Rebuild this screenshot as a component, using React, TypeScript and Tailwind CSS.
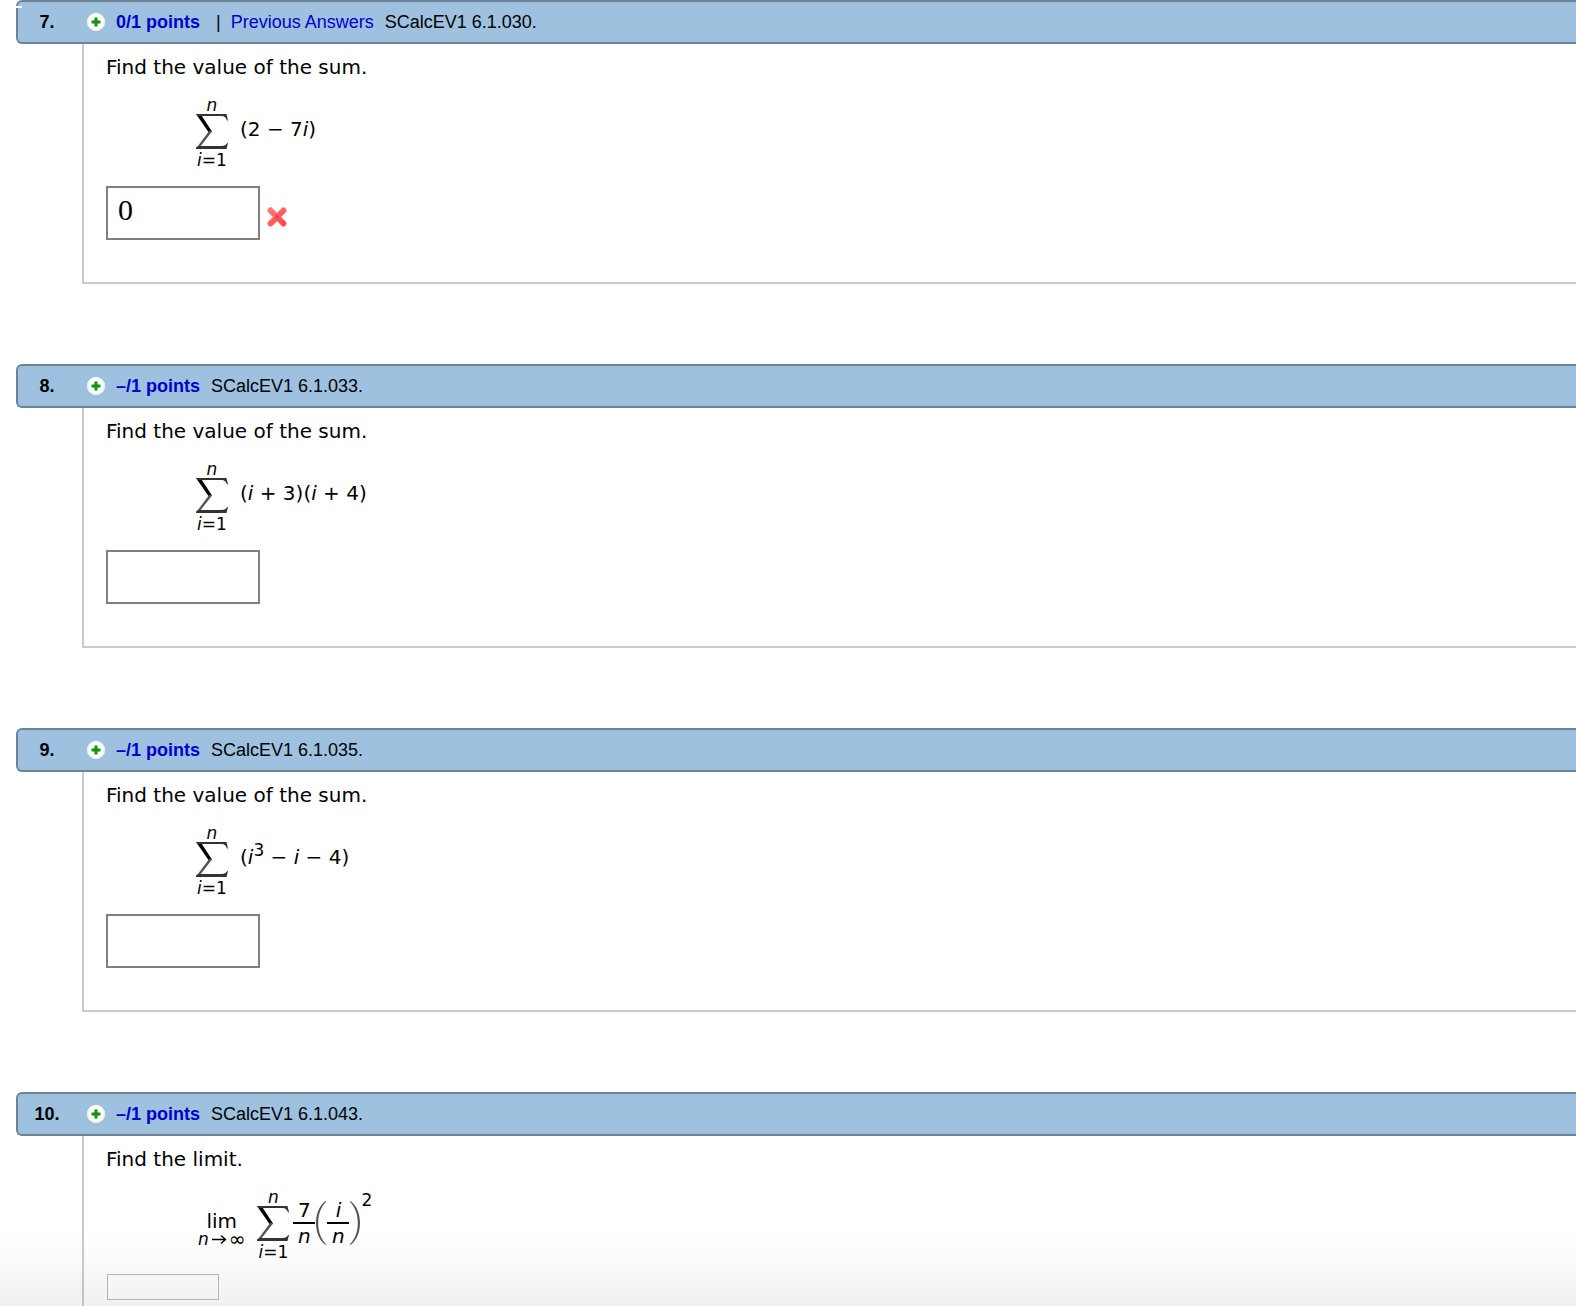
import { type ReactNode } from "react";

interface Question {
  number: number;
  points: string;
  previousAnswers?: boolean;
  source: string;
  prompt: string;
  formula: ReactNode;
  answer?: string;
  wrong?: boolean;
  compact?: boolean;
}

function PlusIcon() {
  return (
    <svg width="20" height="20" viewBox="0 0 20 20" aria-hidden="true">
      <circle cx="10" cy="10.5" r="9.5" fill="#8aa5ba" opacity="0.45" />
      <circle cx="10" cy="10" r="9.3" fill="#e9ebec" />
      <circle cx="10" cy="9.600" r="8" fill="#fdfdfd" />
      <path d="M8.500 5.500h3v3h3v3h-3v3h-3v-3h-3v-3h3z" fill="#0a960a" />
    </svg>
  );
}

function WrongIcon() {
  return (
    <svg width="22" height="22" viewBox="0 0 22 22" role="img" aria-label="Incorrect">
      <defs>
        <linearGradient id="wrong" x1="0" y1="0" x2="1" y2="1">
          <stop offset="0" stopColor="#ff7474" />
          <stop offset="1" stopColor="#fa4448" />
        </linearGradient>
      </defs>
      <path
        d="M4.500 4.500 17.500 17.500M17.500 4.500 4.500 17.500"
        fill="none"
        stroke="#ff9c9c"
        strokeWidth="6.400"
        strokeLinecap="round"
      />
      <path
        d="M4.500 4.500 17.500 17.500M17.500 4.500 4.500 17.500"
        fill="none"
        stroke="url(#wrong)"
        strokeWidth="5"
        strokeLinecap="round"
      />
      <circle cx="11" cy="11" r="1.800" fill="#f23b40" />
    </svg>
  );
}

function SigmaIcon() {
  return (
    <svg width="32" height="36" viewBox="0 0 32 36" aria-hidden="true">
      <path d="M0 0H4.500L16 17.500 13.500 19.500z" fill="#000" />
      <path d="M13.500 16.500 16 17.500 4 33 0 34.500z" fill="#555" />
      <path d="M0 0H30.500L32 6.500H31C30 3.500 28.500 2 25.500 2H2z" fill="#333" />
      <path d="M0 35v-1.500L2.500 32H25.500C28.500 32 30 31 31.200 29H32L30.500 35z" fill="#333" />
    </svg>
  );
}

function Sum() {
  return (
    <span className="flex w-8 flex-col items-center text-[17px]">
      <i className="leading-[18px]">n</i>
      <SigmaIcon />
      <span className="leading-5">
        <i>i</i>=1
      </span>
    </span>
  );
}

function Term({ children }: { children: ReactNode }) {
  return <span className="ml-3 pb-2 leading-6 whitespace-pre">{children}</span>;
}

function Fraction({ top, bottom }: { top: ReactNode; bottom: ReactNode }) {
  return (
    <span className="flex w-[22px] flex-col items-center pb-1 leading-6">
      <span>{top}</span>
      <span className="h-0.5 w-full bg-black" />
      <span>{bottom}</span>
    </span>
  );
}

function Paren({ d }: { d: string }) {
  return (
    <svg className="mb-1" width="12" height="44" viewBox="0 0 12 44" aria-hidden="true">
      <path d={d} fill="#555" />
    </svg>
  );
}

const QUESTIONS: Question[] = [
  {
    number: 7,
    points: "0/1 points",
    previousAnswers: true,
    source: "SCalcEV1 6.1.030.",
    prompt: "Find the value of the sum.",
    answer: "0",
    wrong: true,
    formula: (
      <>
        <Sum />
        <Term>
          (2 − 7<i>i</i>)
        </Term>
      </>
    ),
  },
  {
    number: 8,
    points: "–/1 points",
    source: "SCalcEV1 6.1.033.",
    prompt: "Find the value of the sum.",
    formula: (
      <>
        <Sum />
        <Term>
          (<i>i</i> + 3)(<i>i</i> + 4)
        </Term>
      </>
    ),
  },
  {
    number: 9,
    points: "–/1 points",
    source: "SCalcEV1 6.1.035.",
    prompt: "Find the value of the sum.",
    formula: (
      <>
        <Sum />
        <Term>
          (<i>i</i>
          <sup className="text-[17px]">3</sup> − <i>i</i> − 4)
        </Term>
      </>
    ),
  },
  {
    number: 10,
    points: "–/1 points",
    source: "SCalcEV1 6.1.043.",
    prompt: "Find the limit.",
    compact: true,
    formula: (
      <>
        <span className="mr-3 flex flex-col items-center pt-2 pl-0.5">
          <span className="leading-5">lim</span>
          <span className="flex items-center text-[17px] leading-4">
            <i>n</i>
            <svg width="20" height="10" viewBox="0 0 20 10" aria-hidden="true">
              <path d="M3 5.500h13M12 1.500 16.500 5.500 12 9.500" fill="none" stroke="#000" strokeWidth="1.400" />
            </svg>
            <span className="text-xl leading-4">∞</span>
          </span>
        </span>
        <Sum />
        <span className="ml-1 flex items-center">
          <Fraction top="7" bottom={<i>n</i>} />
          <Paren d="M10.500 0C4 5 1 13 1 22s3 17 9.500 22l.6-.7C6 38 3.200 31 3.200 22S6 6 11.100.7z" />
          <Fraction top={<i>i</i>} bottom={<i>n</i>} />
          <Paren d="M1.500 0c6.500 5 9.500 13 9.500 22S8 39 1.500 44l-.6-.7C6 38 8.800 31 8.800 22S6 6 .9.7z" />
          <sup className="self-start pb-3 text-[17px] leading-5">2</sup>
        </span>
      </>
    ),
  },
];

function QuestionHeader({ q }: { q: Question }) {
  return (
    <header className="flex h-11 items-center rounded-l-md border-2 border-r-0 border-[#6d8496] bg-[#9dc1df] font-['Liberation_Sans',Arial,sans-serif] text-lg whitespace-nowrap">
      <h2 className="w-[58px] text-center font-bold">{q.number}.</h2>
      <button type="button" aria-label="Show details" className="ml-2.5">
        <PlusIcon />
      </button>
      <a href="#points" className="ml-2.5 font-bold text-[#0000cc]">
        {q.points}
      </a>
      {q.previousAnswers && (
        <>
          <span className="ml-4">|</span>
          <a href="#previous" className="ml-2.5 text-[#0000cc]">
            Previous Answers
          </a>
        </>
      )}
      <span className="ml-[11px]">{q.source}</span>
    </header>
  );
}

function QuestionCard({ q }: { q: Question }) {
  return (
    <section className="flex flex-col pl-4 last:grow">
      <QuestionHeader q={q} />
      <div
        className={
          q.compact
            ? "ml-[66px] grow border-l-2 border-[#cbcbcb] pt-[11px] pb-1 pl-[22px]"
            : "ml-[66px] border-b-2 border-l-2 border-[#cbcbcb] pt-[11px] pb-[42px] pl-[22px]"
        }
      >
        <p className="leading-6">{q.prompt}</p>
        <div className="mt-[17px] ml-[90px] flex items-center">{q.formula}</div>
        <div className={q.compact ? "mt-3 flex" : "mt-4 flex items-center gap-1.5"}>
          <input
            type="text"
            aria-label={`Answer to question ${q.number}`}
            defaultValue={q.answer}
            className={
              q.compact
                ? "ml-px h-[26px] w-28 border border-[#bbb] bg-transparent px-1"
                : "h-[54px] w-[154px] border-2 border-[#808080] bg-white px-2.5 pb-1.5 font-['Liberation_Serif',serif] text-3xl"
            }
          />
          {q.wrong && (
            <span className="pt-2">
              <WrongIcon />
            </span>
          )}
        </div>
      </div>
    </section>
  );
}

export default function App() {
  return (
    <main className="relative overflow-hidden bg-white font-['DejaVu_Sans',Verdana,sans-serif] text-xl text-black">
      <div className="flex min-h-screen flex-col gap-20">
        {QUESTIONS.map((q) => (
          <QuestionCard key={q.number} q={q} />
        ))}
      </div>
      <div className="absolute top-1.5 left-4 h-0.5 w-1.5 bg-white" />
      <div className="pointer-events-none absolute inset-x-0 bottom-0 h-20 bg-linear-to-b from-black/0 via-black/2 to-black/6" />
    </main>
  );
}
